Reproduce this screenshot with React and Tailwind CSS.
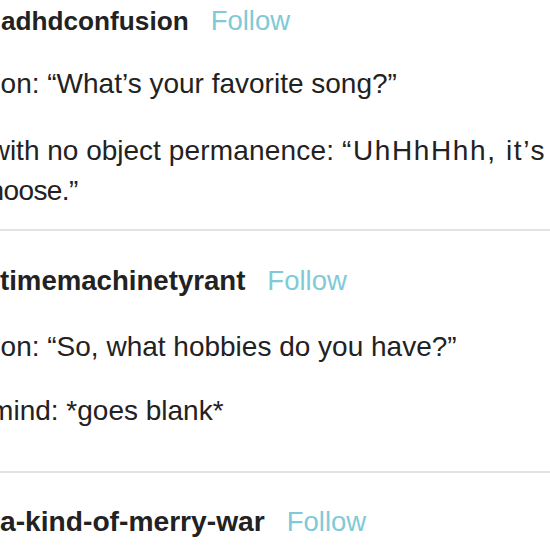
export default function App() {
  const font = "font-['Liberation_Sans','Helvetica_Neue',Arial,sans-serif]";
  return (
    <div className={`w-[550px] h-[550px] overflow-hidden bg-white text-[#222] ${font}`}>
      <div className="flex flex-col whitespace-nowrap pt-[1px]">
        <div className="flex items-baseline gap-[22px] leading-[40px]">
          <span className="font-bold text-[26.2px] ml-[1px]">adhdconfusion</span>
          <span className="text-[27.5px] text-[#80cad7]">Follow</span>
        </div>
        <p className="mt-[23px] -ml-[57px] text-[28px] leading-[40px]">Person: “What’s your favorite song?”</p>
        <p className="mt-[27px] -ml-[57px] text-[28px] leading-[40px]">
          Me with no object <span className="tracking-[0.2px]">permanence:</span> <span className="tracking-[1.6px]">“UhHhHhh, it’s</span> hard
          <br />
          <span className="ml-[1px]">to </span><span className="tracking-[-0.6px]">choose.”</span>
        </p>
        <div className="mt-[18px] h-[2px] bg-[#e2e2e2]" />
        <div className="mt-[30px] flex items-baseline gap-[22px] leading-[40px]">
          <span className="font-bold text-[27.6px]">timemachinetyrant</span>
          <span className="text-[27.5px] text-[#80cad7]">Follow</span>
        </div>
        <p className="mt-[26px] -ml-[57px] text-[28px] leading-[40px]">Person: “So, what hobbies do you have?”</p>
        <p className="mt-[24px] -ml-[55px] text-[28px] leading-[40px]">My mind: *goes blank*</p>
        <div className="mt-[40px] h-[2px] bg-[#e2e2e2]" />
        <div className="mt-[28px] flex items-baseline gap-[22px] leading-[40px]">
          <span className="font-bold text-[28.2px]">a-kind-of-merry-war</span>
          <span className="text-[27.5px] text-[#80cad7]">Follow</span>
        </div>
      </div>
    </div>
  );
}
